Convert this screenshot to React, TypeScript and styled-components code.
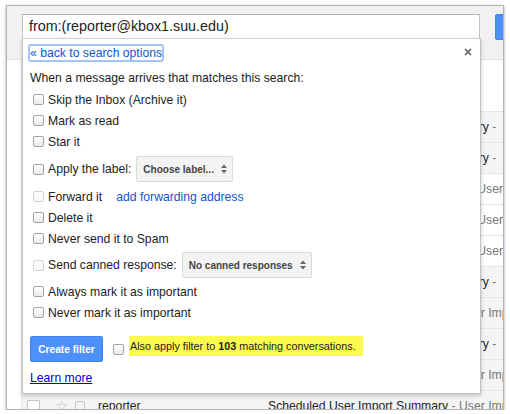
import React from "react"
import styled, { createGlobalStyle } from "styled-components"

const GlobalStyle = createGlobalStyle`
    html, body {
        margin: 0;
        padding: 0;
        background: #fff;
    }
    body {
        font-family: "Liberation Sans", Arial, sans-serif;
        color: #222;
    }
`

interface IMailRow {
    shade: boolean;
    sender: string;
    subject: string;
    snippet: string;
}

const rows: IMailRow[] = [
    { shade: true, sender: "reporter", subject: "Scheduled Nightly User Import Summary", snippet: "  User Import Summary" },
    { shade: true, sender: "reporter", subject: "Scheduled Nightly User Import Summary", snippet: "  User Import Summary" },
    { shade: false, sender: "reporter", subject: "Scheduled User Import Summary (1)", snippet: "User Import Summary" },
    { shade: false, sender: "reporter", subject: "Scheduled User Import Summary (1)", snippet: "User Import Summary" },
    { shade: false, sender: "reporter", subject: "Scheduled User Import Summary (1)", snippet: "User Import Summary" },
    { shade: true, sender: "reporter", subject: "Scheduled Nightly User Import Summary", snippet: "  User Import Summary" },
    { shade: true, sender: "reporter", subject: "Scheduled User Import Summary", snippet: "User Import Summary" },
    { shade: true, sender: "reporter", subject: "Scheduled Nightly User Import Summary", snippet: "  User Import Summary" },
    { shade: true, sender: "reporter", subject: "Scheduled User Import Summary", snippet: "User Import Summary" },
    { shade: true, sender: "reporter", subject: "Scheduled User Import Summary", snippet: "User Import Summary" },
]

const actions = {
    top: ["Skip the Inbox (Archive it)", "Mark as read", "Star it"],
    middle: ["Delete it", "Never send it to Spam"],
    bottom: ["Always mark it as important", "Never mark it as important"],
}

const SelectArrow = () => (
    <svg width="6" height="10" viewBox="0 0 6 10">
        <path d="M0 4 L3 0.5 L6 4 Z M0 6 L3 9.5 L6 6 Z" fill="#666" />
    </svg>
)

const CloseIcon = () => (
    <svg width="8" height="8" viewBox="0 0 8 8">
        <path d="M1 1 L7 7 M7 1 L1 7" stroke="#777" strokeWidth="1.8" />
    </svg>
)

export default function App() {
    return (
        <>
            <GlobalStyle />
            <Window>
                <Header>
                    <SearchBox>from:(reporter@kbox1.suu.edu)</SearchBox>
                    <SearchButton />
                </Header>

                <MailList>
                    <Toolbar />
                    {rows.map((row, index) =>
                        <Row key={index} $shade={row.shade}>
                            <RowCell><RowCheck /></RowCell>
                            <Star>☆</Star>
                            <RowCell><Marker /></RowCell>
                            <Sender>{row.sender}</Sender>
                            <SubjectLine>
                                {row.subject}
                                <Snippet> - {row.snippet}</Snippet>
                            </SubjectLine>
                        </Row>
                    )}
                </MailList>

                <FilterPanel>
                    <CloseButton><CloseIcon /></CloseButton>
                    <BackLink href="#">« back to search options</BackLink>
                    <Intro>When a message arrives that matches this search:</Intro>

                    {actions.top.map(label =>
                        <CheckRow key={label}><Check />{label}</CheckRow>
                    )}

                    <CheckRow $height={34}>
                        <Check />Apply the label:
                        <Select>Choose label...<SelectArrow /></Select>
                    </CheckRow>

                    <CheckRow>
                        <Check $disabled />Forward it
                        <ForwardLink href="#">add forwarding address</ForwardLink>
                    </CheckRow>

                    {actions.middle.map(label =>
                        <CheckRow key={label}><Check />{label}</CheckRow>
                    )}

                    <CheckRow $height={32}>
                        <Check $disabled />Send canned response:
                        <Select>No canned responses<SelectArrow /></Select>
                    </CheckRow>

                    {actions.bottom.map(label =>
                        <CheckRow key={label}><Check />{label}</CheckRow>
                    )}

                    <ActionRow>
                        <CreateButton>Create filter</CreateButton>
                        <Check />
                        <Highlight>Also apply filter to <b>103</b> matching conversations.</Highlight>
                    </ActionRow>

                    <LearnMore href="#">Learn more</LearnMore>
                </FilterPanel>
            </Window>
        </>
    )
}

const Window = styled.div`
    position: relative;
    margin: 5px 0 0 6px;
    width: 496px;
    height: 403px;
    border: 1px solid #b4b4b4;
    box-shadow: 0 1px 3px rgba(0, 0, 0, .35);
    overflow: hidden;
    background: #fff;
    display: flex;
    flex-direction: column;
`

const Header = styled.div`
    flex: none;
    height: 54px;
    box-sizing: border-box;
    padding: 8px 0 0 15px;
    background: #f1f1f1;
    border-bottom: 1px solid #e3e3e3;
    display: flex;
    align-items: flex-start;
    gap: 15px;
`

const SearchBox = styled.div`
    flex: none;
    width: 458px;
    height: 25px;
    box-sizing: border-box;
    padding: 0 6px;
    background: #fff;
    border: 1px solid #c4c4c4;
    border-top-color: #b3b3b3;
    font-size: 14.3px;
    line-height: 23px;
    color: #222;
`

const SearchButton = styled.div`
    flex: none;
    width: 40px;
    height: 26px;
    box-sizing: border-box;
    background: #4d90fe;
    border: 1px solid #3f84f3;
    border-radius: 2px;
`

const MailList = styled.div`
    flex: 1;
    margin-left: 14px;
    border-left: 1px solid #e6e6e6;
    display: flex;
    flex-direction: column;
`

const Toolbar = styled.div`
    flex: none;
    height: 51px;
`

const Row = styled.div<{ $shade: boolean }>`
    flex: none;
    height: 30px;
    border-top: 1px solid #e6e6e6;
    background: ${props => props.$shade ? "#f4f4f4" : "#fff"};
    display: grid;
    grid-template-columns: 33px 21px 22px 170px 1fr;
    align-items: center;
    font-size: 12.2px;
    white-space: pre;
`

const RowCell = styled.div`
    display: flex;
    align-items: center;
    padding-left: 5px;
`

const RowCheck = styled.span`
    width: 11px;
    height: 11px;
    border: 1px solid #c6c6c6;
    border-radius: 1px;
    background: #fff;
`

const Star = styled.span`
    color: #c6c6c6;
    font-size: 15px;
`

const Marker = styled.span`
    width: 8px;
    height: 9px;
    border: 1px solid #c9c9c9;
    border-radius: 1px;
    margin-left: -6px;
`

const Sender = styled.span`
    color: #222;
`

const SubjectLine = styled.span`
    overflow: hidden;
    color: #222;
`

const Snippet = styled.span`
    color: #777;
`

const FilterPanel = styled.div`
    position: absolute;
    left: 15px;
    top: 32px;
    width: 459px;
    height: 356px;
    box-sizing: border-box;
    padding: 5px 8px 0 7px;
    background: #fff;
    border: 1px solid #c2c2c2;
    border-top-color: #d0d0d0;
    box-shadow: 0 2px 4px rgba(0, 0, 0, .2);
    display: flex;
    flex-direction: column;
    align-items: flex-start;
    font-size: 12.2px;
    color: #222;
`

const CloseButton = styled.div`
    position: absolute;
    top: 9px;
    right: 8px;
    display: flex;
`

const BackLink = styled.a`
    margin-left: -2px;
    height: 18px;
    box-sizing: border-box;
    border: 2px solid #a3c4f7;
    border-radius: 3px;
    line-height: 14px;
    color: #1155cc;
    text-decoration: none;
`

const Intro = styled.div`
    margin-top: 6px;
    line-height: 21px;
`

const CheckRow = styled.div<{ $height?: number }>`
    height: ${props => props.$height ?? 21}px;
    margin-left: 3px;
    display: flex;
    align-items: center;
    gap: 3px;
    white-space: nowrap;
`

const Check = styled.span<{ $disabled?: boolean }>`
    flex: none;
    width: 11px;
    height: 11px;
    box-sizing: border-box;
    border: 1px solid ${props => props.$disabled ? "#d2d2d2" : "#a2a2a2"};
    border-radius: 2px;
    background: linear-gradient(#ffffff, ${props => props.$disabled ? "#f6f6f6" : "#ebebeb"});
    margin-right: 1px;
`

const Select = styled.div`
    margin-left: 2px;
    height: 26px;
    box-sizing: border-box;
    padding: 0 5px 0 6px;
    background: #f3f3f3;
    border: 1px solid #dadada;
    border-radius: 2px;
    display: flex;
    align-items: center;
    gap: 7px;
    font-size: 10px;
    font-weight: 700;
    color: #444;
`

const ForwardLink = styled.a`
    margin-left: 11px;
    color: #1155cc;
    text-decoration: none;
`

const ActionRow = styled.div`
    margin-top: 13px;
    display: flex;
    align-items: center;
    gap: 4px;
`

const CreateButton = styled.div`
    width: 73px;
    height: 26px;
    box-sizing: border-box;
    margin-right: 6px;
    background: #4d90fe;
    border: 1px solid #3f84f3;
    border-radius: 2px;
    color: #fff;
    font-size: 10.2px;
    font-weight: 700;
    display: flex;
    align-items: center;
    justify-content: center;
`

const Highlight = styled.span`
    height: 20px;
    padding: 0 7px 0 1px;
    margin-top: -6px;
    background: #fbfb4e;
    font-size: 10.8px;
    line-height: 20px;
    color: #222;
`

const LearnMore = styled.a`
    margin-top: 8px;
    line-height: 16px;
    color: #0000cc;
    text-decoration: underline;
`
